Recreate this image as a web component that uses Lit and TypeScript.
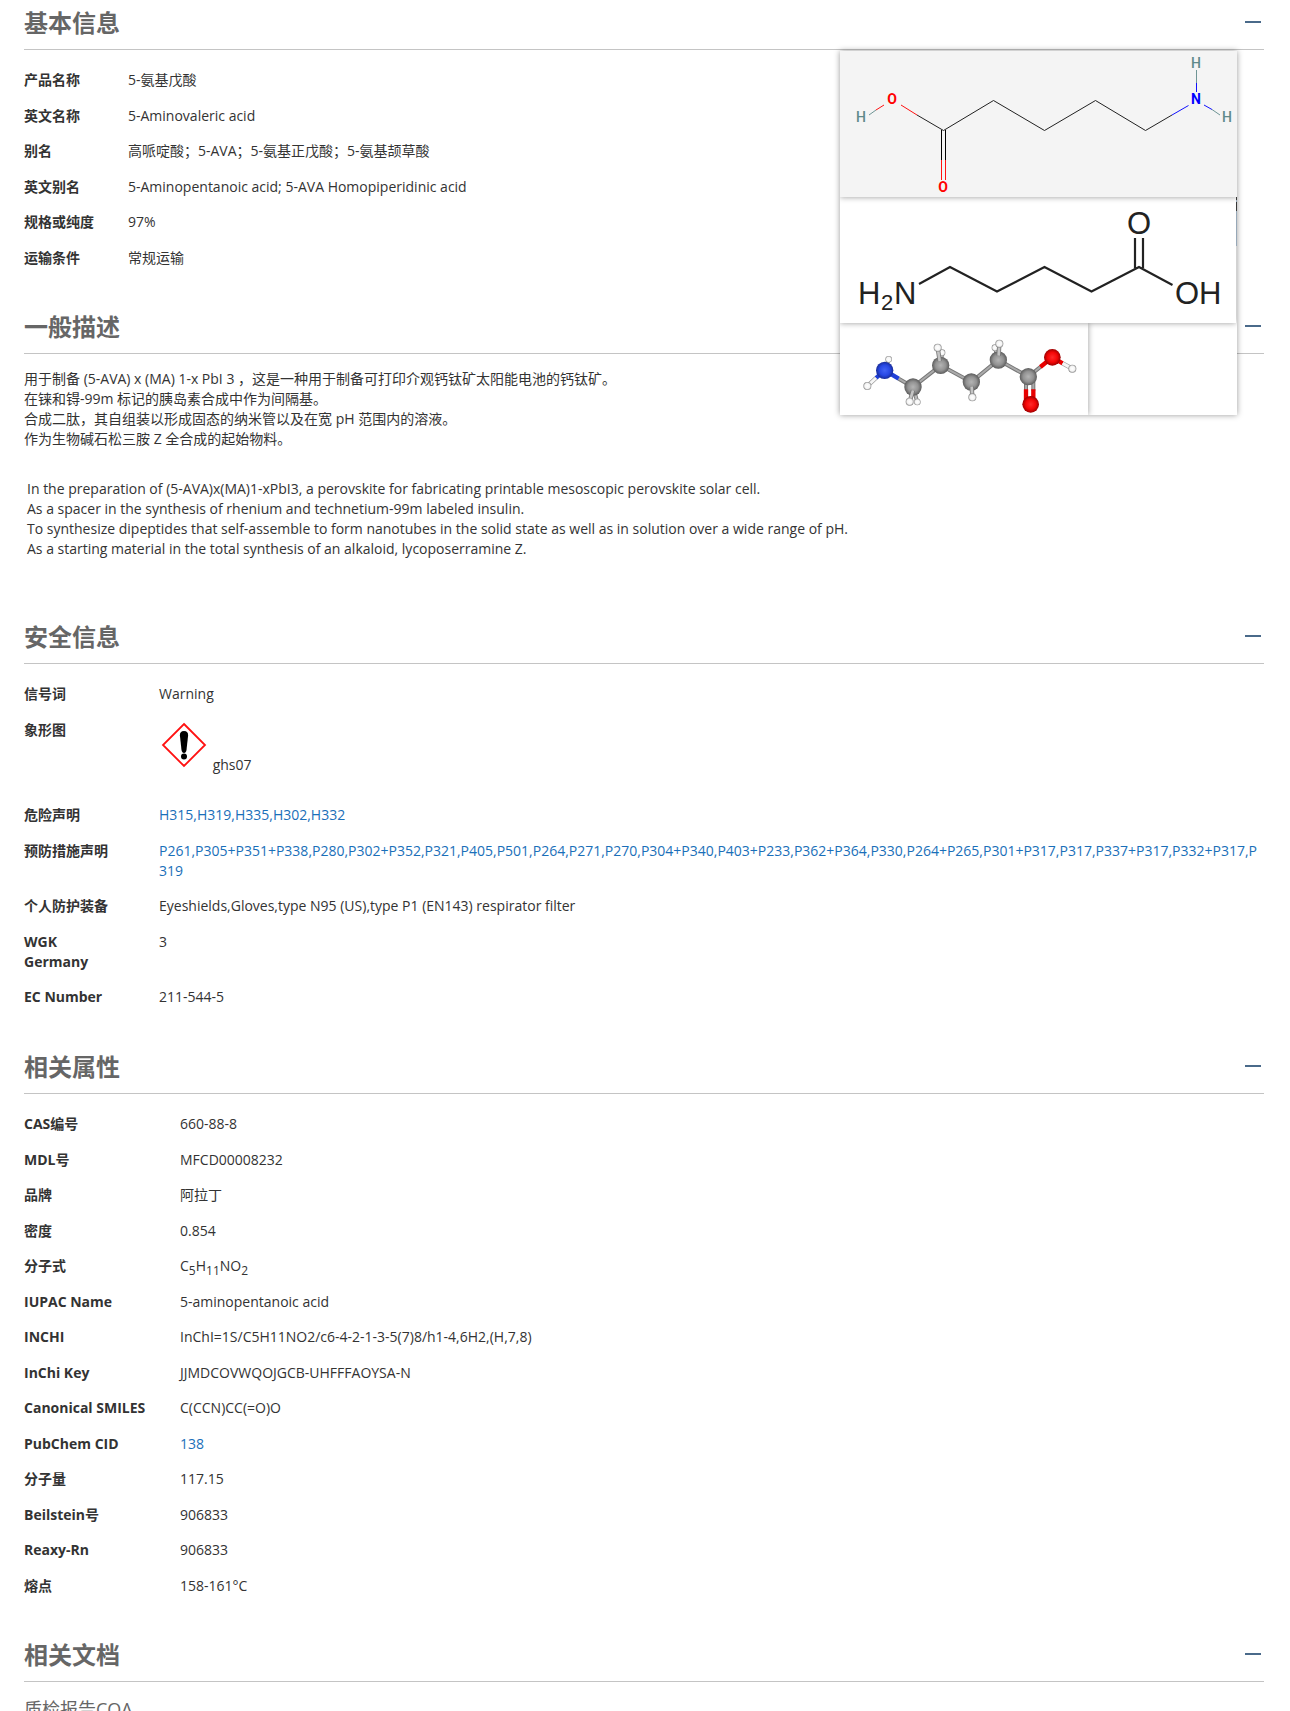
import { LitElement, html, svg, css, nothing, type TemplateResult } from "lit";
import { customElement, property, state } from "lit/decorators.js";

type Cell = string | TemplateResult;
type Row = [label: string, value: Cell];

const basicRows: Row[] = [
  ["产品名称", "5-氨基戊酸"],
  ["英文名称", "5-Aminovaleric acid"],
  ["别名", "高哌啶酸；5-AVA；5-氨基正戊酸；5-氨基颉草酸"],
  ["英文别名", "5-Aminopentanoic acid; 5-AVA Homopiperidinic acid"],
  ["规格或纯度", "97%"],
  ["运输条件", "常规运输"],
];

const pictogram = html`<span class="pictogram"><svg class="ghs" viewBox="0 0 50 50" role="img" aria-label="ghs07">
  <path d="M25 4 46 25 25 46 4 25Z" fill="#fff" stroke="#f11" stroke-width="1.8" />
  <path d="M25 11c3 0 4.200 1.600 4.100 4.400L27.500 30q-.5 3-2.500 3t-2.500-3l-1.600-14.600c-.1-2.800 1.100-4.400 4.100-4.400Z" />
  <circle cx="25" cy="36.500" r="3" />
</svg> ghs07</span>`;

const safetyRows: Row[] = [
  ["信号词", "Warning"],
  ["象形图", pictogram],
  ["危险声明", html`<a href="#hazard">H315,H319,H335,H302,H332</a>`],
  [
    "预防措施声明",
    html`<a href="#precaution">P261,P305+P351+P338,P280,P302+P352,P321,P405,P501,P264,P271,P270,P304+P340,P403+P233,P362+P364,P330,P264+P265,P301+P317,P317,P337+P317,P332+P317,P319</a>`,
  ],
  ["个人防护装备", "Eyeshields,Gloves,type N95 (US),type P1 (EN143) respirator filter"],
  ["WGK Germany", "3"],
  ["EC Number", "211-544-5"],
];

const propertyRows: Row[] = [
  ["CAS编号", "660-88-8"],
  ["MDL号", "MFCD00008232"],
  ["品牌", "阿拉丁"],
  ["密度", "0.854"],
  ["分子式", html`C<sub>5</sub>H<sub>11</sub>NO<sub>2</sub>`],
  ["IUPAC Name", "5-aminopentanoic acid"],
  ["INCHI", "InChI=1S/C5H11NO2/c6-4-2-1-3-5(7)8/h1-4,6H2,(H,7,8)"],
  ["InChi Key", "JJMDCOVWQOJGCB-UHFFFAOYSA-N"],
  ["Canonical SMILES", "C(CCN)CC(=O)O"],
  ["PubChem CID", html`<a href="#pubchem-138">138</a>`],
  ["分子量", "117.15"],
  ["Beilstein号", "906833"],
  ["Reaxy-Rn", "906833"],
  ["熔点", "158-161°C"],
];

const descriptionZh = [
  "用于制备 (5-AVA) x (MA) 1-x PbI 3 ，这是一种用于制备可打印介观钙钛矿太阳能电池的钙钛矿。",
  "在铼和锝-99m 标记的胰岛素合成中作为间隔基。",
  "合成二肽，其自组装以形成固态的纳米管以及在宽 pH 范围内的溶液。",
  "作为生物碱石松三胺 Z 全合成的起始物料。",
];

const descriptionEn = [
  "In the preparation of (5-AVA)x(MA)1-xPbI3, a perovskite for fabricating printable mesoscopic perovskite solar cell.",
  "As a spacer in the synthesis of rhenium and technetium-99m labeled insulin.",
  "To synthesize dipeptides that self-assemble to form nanotubes in the solid state as well as in solution over a wide range of pH.",
  "As a starting material in the total synthesis of an alkaloid, lycoposerramine Z.",
];

@customElement("info-section")
class InfoSection extends LitElement {
  @property() heading = "";
  @state() private open = true;

  static styles = css`
    :host {
      display: block;
    }
    .head {
      display: flex;
      align-items: center;
      justify-content: space-between;
      box-sizing: border-box;
      height: 50px;
      padding: 0 3px 3px 0;
      border-bottom: 1px solid #c4c4c4;
    }
    .title {
      margin: 0;
      font-size: 24px;
      line-height: 32px;
      font-weight: 700;
      color: #666;
    }
    .toggle {
      display: flex;
      padding: 7px 0 9px;
      border: 0;
      background: none;
      cursor: pointer;
    }
    .icon {
      width: 16px;
      height: 16px;
      fill: #4a6a8a;
    }
  `;

  render() {
    return html`
      <div class="head">
        <h2 class="title">${this.heading}</h2>
        <button
          class="toggle"
          type="button"
          aria-label=${this.heading}
          aria-expanded=${this.open}
          @click=${() => (this.open = !this.open)}
        >
          <svg class="icon" viewBox="0 0 16 16" aria-hidden="true">
            <rect x="0" y="7" width="16" height="2" />
            ${this.open ? nothing : svg`<rect x="7" y="0" width="2" height="16" />`}
          </svg>
        </button>
      </div>
      ${this.open ? html`<slot></slot>` : nothing}
    `;
  }
}

@customElement("structure-gallery")
class StructureGallery extends LitElement {
  static styles = css`
    :host {
      display: block;
      background: #fff;
      box-shadow: 0 0 6px rgba(0, 0, 0, 0.4);
    }
    .shot {
      display: block;
      box-shadow: 0 0 6px rgba(0, 0, 0, 0.4);
      background: #fff;
      position: relative;
    }
    .flat {
      width: 397px;
      height: 146px;
      background: #f4f4f4;
      z-index: 3;
    }
    .drawn {
      width: 396px;
      height: 126px;
      z-index: 2;
    }
    .model {
      width: 248px;
      height: 92px;
      z-index: 1;
    }
    .gallery {
      display: flex;
      flex-direction: column;
      align-items: flex-start;
      overflow: hidden;
    }
    .edge {
      position: absolute;
      top: 146px;
      right: 0;
      width: 1px;
      height: 49px;
      background: linear-gradient(#444 0 3px, #b8cce0 3px 5px, #444 5px 14px, #b8cce0 14px);
    }
    .atoms {
      font: 500 14px Roboto, sans-serif;
      text-anchor: middle;
    }
    .hetero {
      font-weight: 700;
    }
    .letters {
      font: 31px "Liberation Sans", sans-serif;
      fill: #222;
    }
    .small {
      font-size: 22px;
    }
  `;

  private flat() {
    const hydrogens = [[21, 71], [356, 17], [387, 71]];
    return html`<svg class="shot flat" viewBox="0 0 397 146" role="img" aria-label="5-Aminovaleric acid">
      <g fill="none" stroke="#222" stroke-width="1">
        <path d="M77 64 103.500 79.500 153.500 49.500 204.500 79.500 255.500 49.500 305.500 79.500 332 64" />
        <path d="M101.500 79V109M105.500 79V109" stroke="#000" />
        <path d="M101.500 109V129M105.500 109V129M61 54 77 64M44 54 36 59" stroke="#f11" />
        <path d="M332 64 348.500 54.500M356.500 41V32M364 54 372 58.500" stroke="#11f" />
        <path d="M36 59 29 64M356.500 32V19M372 58.500 380 64" stroke="#6f9595" />
      </g>
      <g class="atoms">
        ${hydrogens.map(([x, y]) => svg`<text x=${x} y=${y} fill="#5f8a8a">H</text>`)}
        <g class="hetero">
          <text x="52" y="53" fill="#f00">O</text>
          <text x="103" y="141" fill="#f00">O</text>
          <text x="356" y="53" fill="#00f">N</text>
        </g>
      </g>
    </svg>`;
  }

  private drawn() {
    return html`<svg class="shot drawn" viewBox="0 0 396 126" role="img" aria-label="H2N OH">
      <path
        d="M79 87 110 70 157 94.500 204.500 70 251.500 94.500 299 70 332.500 88M295 41V71M303 41V71"
        fill="none" stroke="#222" stroke-width="2.200"
      />
      <g class="letters">
        <text x="18" y="107">H</text>
        <text class="small" x="41" y="113">2</text>
        <text x="54" y="107">N</text>
        <text x="287" y="37">O</text>
        <text x="335" y="107">OH</text>
      </g>
    </svg>`;
  }

  private model() {
    const ball = (fill: string, r: number, points: number[][]) =>
      points.map(([x, y]) => svg`<circle cx=${x} cy=${y} r=${r} fill=${fill} />`);
    return html`<svg class="shot model" viewBox="0 -6 744 276" role="img" aria-label="3D">
      <defs>
        <radialGradient id="c"><stop offset="0" stop-color="#b4b4b4" /><stop offset=".6" stop-color="#929292" /><stop offset="1" stop-color="#5c5c5c" /></radialGradient>
        <radialGradient id="n"><stop offset="0" stop-color="#4364f4" /><stop offset=".6" stop-color="#2848e4" /><stop offset="1" stop-color="#182c98" /></radialGradient>
        <radialGradient id="o"><stop offset="0" stop-color="#ff2a2a" /><stop offset=".6" stop-color="#f40606" /><stop offset="1" stop-color="#9c0000" /></radialGradient>
        <radialGradient id="h"><stop offset="0" stop-color="#fff" /><stop offset=".65" stop-color="#f4f4f4" /><stop offset="1" stop-color="#8a8a8a" /></radialGradient>
      </defs>
      <g fill="none">
        <path d="M134 136 146 103M302 121 306 83M475 105 465 68M219 186 232 231" stroke="#777" stroke-width="12" />
        <path d="M134 136 146 103M302 121 306 83M475 105 465 68M219 186 232 231" stroke="#bbb" stroke-width="7" />
      </g>
      ${ball("url(#h)", 10, [[146, 103], [306, 83], [465, 68], [232, 231]])}
      <g fill="none">
        <path d="M176 161 219 186 302 121 394 171 475 105 565 155 601 126" stroke="#777" stroke-width="12" />
        <path d="M176 161 219 186 302 121 394 171 475 105 565 155 601 126" stroke="#aaa" stroke-width="6" />
        <path d="M558 155V197M580 155V197" stroke="#777" stroke-width="12" />
        <path d="M558 155V197M580 155V197" stroke="#aaa" stroke-width="6" />
        <path d="M558 193V238M580 193V238M601 126 637 97 668 115" stroke="#e80000" stroke-width="13" />
        <path d="M134 136 176 161M134 136 108 159" stroke="#2040d8" stroke-width="13" />
        <path d="M108 159 82 183M668 115 697 131" stroke="#999" stroke-width="13" />
        <path d="M108 159 82 183M668 115 697 131" stroke="#f6f6f6" stroke-width="9" />
      </g>
      ${ball("url(#c)", 26, [[219, 186], [302, 121], [394, 171], [475, 105], [565, 155]])}
      <g fill="none">
        <path d="M219 196 209 230M299 108 293 68M395 185 397 217M476 92 478 56" stroke="#777" stroke-width="13" />
        <path d="M219 196 209 230M299 108 293 68M395 185 397 217M476 92 478 56" stroke="#c4c4c4" stroke-width="8" />
      </g>
      ${ball("url(#n)", 26, [[134, 136]])}
      ${ball("url(#o)", 25, [[637, 97], [572, 238]])}
      ${ball("url(#h)", 12, [[293, 68], [397, 217], [478, 56], [209, 230], [82, 183], [697, 131]])}
    </svg>`;
  }

  render() {
    return html`<div class="gallery">${this.flat()}${this.drawn()}${this.model()}</div>
      <span class="edge"></span>`;
  }
}

@customElement("app-root")
class AppRoot extends LitElement {
  static styles = css`
    :host {
      display: block;
      font-family: "Open Sans", "Noto Sans CJK SC", sans-serif;
      font-size: 14px;
      line-height: 20px;
      color: #333;
      background: #fff;
    }
    .page {
      position: relative;
      padding: 0 26px 0 24px;
    }
    .gallery {
      position: absolute;
      top: 51px;
      right: 53px;
      z-index: 1;
    }
    .facts {
      width: 100%;
      table-layout: fixed;
      border-collapse: collapse;
      margin: 12px 0 29px;
    }
    .label,
    .value {
      padding: 8px 0;
      text-align: left;
      vertical-align: top;
    }
    .row:nth-child(even) > * {
      padding-bottom: 7px;
    }
    .label {
      font-weight: 700;
    }
    .basic .label {
      width: 104px;
    }
    .safety .label {
      width: 87px;
      padding-right: 48px;
    }
    .props .label {
      width: 156px;
    }
    .value {
      word-break: break-all;
    }
    sub {
      font-size: 12px;
      line-height: 0;
      vertical-align: sub;
    }
    a {
      color: #1a6fb9;
      text-decoration: none;
    }
    .pictogram {
      display: block;
      height: 70px;
    }
    .ghs {
      width: 50px;
      height: 50px;
    }
    .text {
      padding: 15px 0 55px;
    }
    .para {
      margin: 0;
    }
    .para + .para {
      margin-top: 30px;
      padding-left: 3px;
    }
    .sub {
      margin: 0;
      padding-top: 15px;
      font-size: 18px;
      line-height: 24px;
      font-weight: 400;
      color: #666;
    }
  `;

  private table(kind: string, rows: Row[]) {
    return html`<table class="facts ${kind}">
      <tbody>
        ${rows.map(
          ([label, value]) => html`<tr class="row">
            <th class="label" scope="row">${label}</th>
            <td class="value">${value}</td>
          </tr>`,
        )}
      </tbody>
    </table>`;
  }

  private lines(items: string[]) {
    return html`<p class="para">${items.map((t, i) => (i ? html`<br />${t}` : t))}</p>`;
  }

  render() {
    return html`<main class="page" lang="zh-CN">
      <structure-gallery class="gallery"></structure-gallery>
      <info-section heading="基本信息">${this.table("basic", basicRows)}</info-section>
      <info-section heading="一般描述">
        <div class="text">${this.lines(descriptionZh)}${this.lines(descriptionEn)}</div>
      </info-section>
      <info-section heading="安全信息">${this.table("safety", safetyRows)}</info-section>
      <info-section heading="相关属性">${this.table("props", propertyRows)}</info-section>
      <info-section heading="相关文档"><h3 class="sub">质检报告COA</h3></info-section>
    </main>`;
  }
}
